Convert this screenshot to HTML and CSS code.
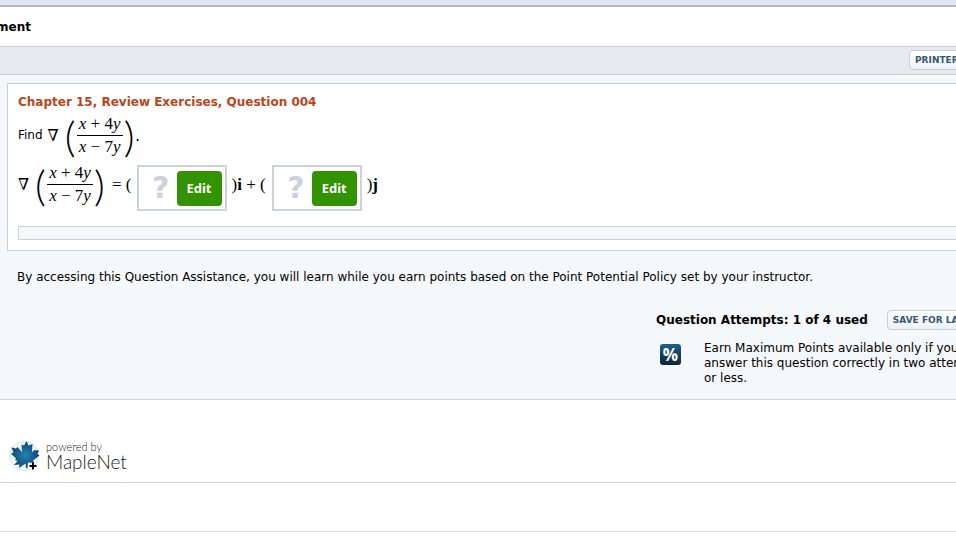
FILE: index.html
```html
<!DOCTYPE html>
<html lang="en">
  <head>
    <meta charset="UTF-8" />
    <title>Assignment</title>
    <link rel="stylesheet" href="styles.css">
  </head>

  <body>
    <div class="topbar"></div>
    <header class="header">
      <h1>ment</h1>
    </header>
    <div class="toolbar">
      <div class="toolbar-actions">
        <button type="button" class="btn">PRINTER VERSION</button>
      </div>
    </div>

    <main class="main">
      <section class="card">
        <h2>Chapter 15, Review Exercises, Question 004</h2>
        <div class="row">
          <span class="find">Find</span>
          <span class="nabla">∇</span>
          <span class="paren">(</span>
          <span class="frac">
            <span class="num"><i>x</i> + 4<i>y</i></span>
            <span class="den"><i>x</i> − 7<i>y</i></span>
          </span>
          <span class="paren">)</span>
          <span class="dot">.</span>
        </div>
        <div class="row answer">
          <span class="nabla">∇</span>
          <span class="paren">(</span>
          <span class="frac">
            <span class="num"><i>x</i> + 4<i>y</i></span>
            <span class="den"><i>x</i> − 7<i>y</i></span>
          </span>
          <span class="paren">)</span>
          <span class="equals">= (</span>
          <span class="blank"><span class="mark">?</span><button type="button" class="edit">Edit</button></span>
          <span class="between">)<b>i</b> + (</span>
          <span class="blank"><span class="mark">?</span><button type="button" class="edit">Edit</button></span>
          <span class="between">)<b>j</b></span>
        </div>
        <div class="strip"></div>
      </section>

      <p class="policy">By accessing this Question Assistance, you will learn while you earn points based on the Point Potential Policy set by your instructor.</p>

      <section class="attempts">
        <div class="attempts-head">
          <strong>Question Attempts: 1 of 4 used</strong>
          <button type="button" class="btn">SAVE FOR LATER</button>
        </div>
        <div class="points">
          <span class="percent">%</span>
          <p>Earn Maximum Points available only if you answer this question correctly in two attempts or less.</p>
        </div>
      </section>
    </main>

    <footer class="footer">
      <div class="logo">
        <svg width="32" height="32" viewBox="0 0 32 32" aria-hidden="true">
          <defs>
            <radialGradient id="leaf">
              <stop offset="0" stop-color="#2583b5" />
              <stop offset="1" stop-color="#0b4872" />
            </radialGradient>
          </defs>
          <circle cx="15" cy="16" r="14.5" fill="#f4f9fc" stroke="#dde0e7" />
          <path fill="url(#leaf)" d="M17.500 1l2 4.500 4-1.500-.5 8 2.500-2 4.500.5-1.500 3.500 2 1.500-6.500 5 1 2.500-6-.5-.5 6-1.500-.5-.5-4.500-6.500 4.500.5-3.500-5.500.5 3.500-4-2.500-1 1-1.500-5-5 2.500-1-2-5 4.500 1 1.500-1.500 4.500 5-.5-7.500 2.500 1z" />
          <path stroke="#000" stroke-width="2" d="M20.500 26h7M24 22.500v7" />
        </svg>
        <div class="logo-text">
          <span class="powered">powered by</span>
          <span class="name">MapleNet</span>
        </div>
      </div>
    </footer>
    <div class="bottom"></div>
  </body>
</html>
```
FILE: styles.css
```css
* {
  box-sizing: border-box;
}

body,
h1,
h2,
p {
  margin: 0;
}

body {
  overflow-x: hidden;
  background: #fff;
  color: #000;
  font: 12px/15px Verdana, "DejaVu Sans", sans-serif;
}

button {
  font-family: inherit;
  cursor: pointer;
}

.topbar {
  height: 7px;
  background: #e2e9f3;
  border-bottom: 2px solid #b1bbc5;
}

.header {
  margin-left: -4px;
  padding: 13px 0 11px;
}

h1 {
  font-size: 12px;
  line-height: 15px;
}

.toolbar {
  display: flex;
  justify-content: flex-end;
  padding: 3px 0 4px;
  background: #e6eaee;
  border-top: 1px solid #c9ced4;
  border-bottom: 1px solid #c9ced4;
}

/* the button runs past the edge of the window */
.toolbar-actions {
  width: 47px;
}

.btn {
  height: 20px;
  padding: 0 5px;
  border: 1px solid #c3ced9;
  border-radius: 4px;
  background: linear-gradient(#fff, #edf2f7);
  color: #3b5673;
  font-size: 9px;
  font-weight: bold;
  line-height: 16px;
  white-space: nowrap;
}

.main {
  padding: 8px 0 13px 7px;
  background: #f5f8fb;
  border-bottom: 1px solid #cfd4da;
}

.card {
  padding: 11px 0 10px 10px;
  background: #fff;
  border: 1px solid #c9cfd8;
  border-right: 0;
}

h2 {
  color: #b8461b;
  font-size: 12px;
  line-height: 15px;
}

.row {
  display: flex;
  align-items: center;
  height: 51px;
  font: 17px/22px "Liberation Serif", serif;
}

.answer {
  height: 47px;
}

.find {
  margin-right: 5px;
  font: 12px/15px Verdana, "DejaVu Sans", sans-serif;
}

.nabla {
  width: 12px;
  margin-right: 4px;
  font: 16px/22px "DejaVu Serif", serif;
}

.paren {
  width: 13px;
  font: 300 42px/42px Lato, sans-serif;
  text-align: center;
}

.frac {
  width: 46px;
  text-align: center;
}

.num,
.den {
  display: block;
  white-space: nowrap;
}

.num {
  border-bottom: 1px solid #000;
}

.equals {
  margin: 0 5px 0 6px;
}

.blank {
  display: flex;
  align-items: center;
  justify-content: flex-end;
  width: 90px;
  height: 46px;
  margin-top: 7px;
  padding-right: 3px;
  border: 2px solid #cdd1dc;
}

.mark {
  margin-right: 7px;
  color: #cdd1dc;
  font: bold 30px/36px "DejaVu Sans", sans-serif;
}

.edit {
  width: 45px;
  height: 35px;
  padding: 0;
  border: 0;
  border-radius: 4px;
  background: #329200;
  color: #fff;
  font: bold 13px/16px "Noto Sans", sans-serif;
}

.between {
  margin: 0 6px 0 5px;
}

.strip {
  height: 14px;
  margin-top: 18px;
  background: #f5f8fb;
  border: 1px solid #cbd0dc;
  border-right: 0;
}

.policy {
  padding: 19px 10px 17px;
}

.attempts {
  width: 300px;
  margin-left: auto;
  padding-top: 8px;
}

.attempts-head {
  display: flex;
  align-items: center;
  gap: 19px;
  white-space: nowrap;
}

.points {
  display: flex;
  gap: 23px;
  margin-top: 11px;
  padding-left: 4px;
}

.points p {
  flex: none;
  width: 285px;
}

.percent {
  flex: none;
  width: 21px;
  height: 21px;
  margin-top: 3px;
  border-radius: 3px;
  background: linear-gradient(#1f5f8a, #0c2433);
  color: #fff;
  font: bold 17px/21px "Open Sans", sans-serif;
  text-align: center;
}

.footer {
  padding: 40px 0 10px 9px;
  border-bottom: 1px solid #cfcfcf;
}

.logo {
  display: flex;
  gap: 5px;
}

.logo-text {
  display: flex;
  flex-direction: column;
  color: #222;
  font-family: Lato, sans-serif;
}

.powered {
  font-size: 11px;
  font-weight: 300;
  line-height: 13px;
}

.name {
  font-size: 19px;
  font-weight: 300;
  line-height: 17px;
}

.bottom {
  height: 49px;
  border-bottom: 1px solid #dcdcdc;
}
```
